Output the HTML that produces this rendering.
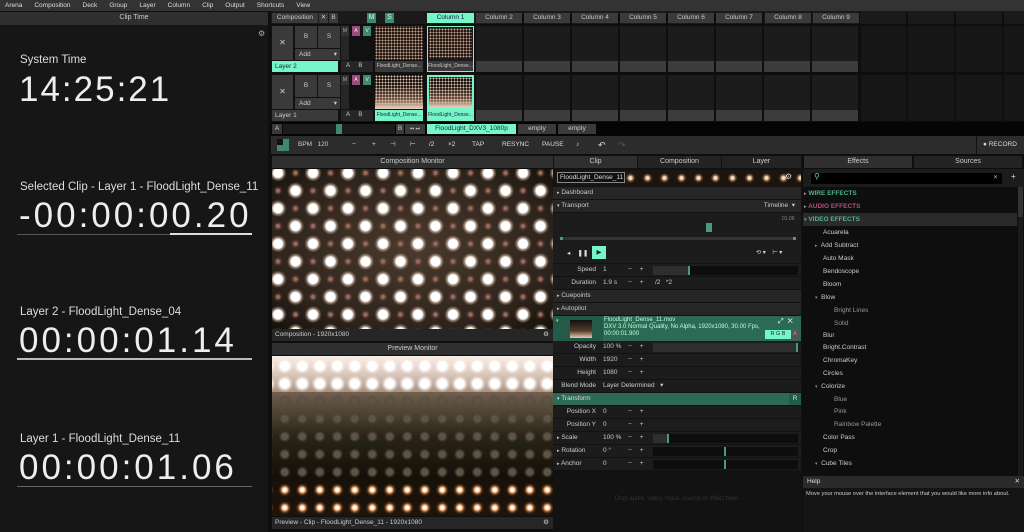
<!DOCTYPE html>
<html><head><meta charset="utf-8"><style>
*{box-sizing:border-box;margin:0;padding:0}
body{width:1024px;height:532px;background:#0e0e0e;font-family:"Liberation Sans",sans-serif;font-size:7px;color:#ccc;position:relative;overflow:hidden}
.a{position:absolute}
.menu{left:0;top:0;width:1024px;height:11px;background:#333;color:#ddd;font-size:6.5px;line-height:11px}
.menu span{margin-left:5px;margin-right:7px}
.hdr{background:#2f2f2f;color:#ccc;text-align:center;font-size:7px;line-height:12px}
.btn{background:#3a3a3a;color:#ccc;text-align:center;font-size:6.5px}
.mint{background:#76f5c8;color:#124;}
.big{color:#eee;font-size:35px;letter-spacing:2.5px}
.lab{color:#ddd;font-size:11.5px}
.row{left:553px;width:248px;height:13px;background:#1c1c1c;border-bottom:1px solid #111;font-size:6.5px;line-height:12px;color:#ccc}
.row .k{position:absolute;right:205px;text-align:right;white-space:nowrap}
.row .v{position:absolute;left:50px}
.row .pm{position:absolute;left:75px;letter-spacing:8px}
.row .bar{position:absolute;left:100px;width:145px;top:2px;height:9px;background:#0d0d0d}
.sec{background:#262626;color:#ccc}
.fx{left:810px;font-size:6.5px;color:#ccc;height:13px;line-height:13px}
.th{background:radial-gradient(circle,#c8a590 0 .8px,transparent 1.2px) 0 0/3px 3px,#140c08}
</style></head><body>
<div class="a menu"><span>Arena</span><span>Composition</span><span>Deck</span><span>Group</span><span>Layer</span><span>Column</span><span>Clip</span><span>Output</span><span>Shortcuts</span><span>View</span></div>

<div class="a hdr" style="left:0;top:12px;width:268px;height:13px">Clip Time</div>
<div class="a" style="left:0;top:25px;width:268px;height:507px;background:#161616"></div>
<div class="a" style="left:258px;top:29px;color:#aaa;font-size:8px">⚙</div>
<div class="a lab" style="left:20px;top:54px">System Time</div>
<div class="a big" style="left:19px;top:70px;letter-spacing:2px">14:25:21</div>
<div class="a lab" style="left:20px;top:181px">Selected Clip - Layer 1 - FloodLight_Dense_11</div>
<div class="a big" style="left:19px;top:196px;letter-spacing:3px">-00:00:00.20</div>
<div class="a" style="left:17px;top:234px;width:153px;height:1px;background:#555"></div>
<div class="a" style="left:170px;top:233px;width:82px;height:2px;background:#ddd"></div>
<div class="a lab" style="left:20px;top:306px">Layer 2 - FloodLight_Dense_04</div>
<div class="a big" style="left:19px;top:321px;letter-spacing:3px">00:00:01.14</div>
<div class="a" style="left:17px;top:358px;width:235px;height:2px;background:#bbb"></div>
<div class="a lab" style="left:20px;top:433px">Layer 1 - FloodLight_Dense_11</div>
<div class="a big" style="left:19px;top:448px;letter-spacing:3px">00:00:01.06</div>
<div class="a" style="left:17px;top:486px;width:235px;height:1px;background:#666"></div>

<div class="a" style="left:271px;top:11px;width:753px;height:14px;background:#1a1a1a"></div>
<div class="a" style="left:476px;top:26px;width:384px;height:46px;background:linear-gradient(#1c1c1c 0 35px,#3c3c3c 35px);"></div>
<div class="a" style="left:476px;top:75px;width:384px;height:46px;background:linear-gradient(#1c1c1c 0 35px,#3c3c3c 35px);"></div>
<div class="a" style="left:861px;top:26px;width:163px;height:46px;background:#161616"></div>
<div class="a" style="left:861px;top:75px;width:163px;height:46px;background:#161616"></div>
<div class="a" style="left:476px;top:12px;width:548px;height:110px;background:repeating-linear-gradient(90deg,transparent 0 46px,#0e0e0e 46px 48px)"></div>
<div class="a" style="left:271px;top:24px;width:753px;height:2px;background:#0e0e0e"></div>
<div class="a" style="left:271px;top:73px;width:753px;height:2px;background:#0e0e0e"></div>
<div class="a" style="left:271px;top:25px;width:205px;height:97px;background:#111"></div>

<div class="a btn" style="left:272px;top:13px;width:46px;height:10px;line-height:10px">Composition</div>
<div class="a btn" style="left:319px;top:13px;width:9px;height:10px;line-height:10px">✕</div>
<div class="a btn" style="left:329px;top:13px;width:9px;height:10px;line-height:10px">B</div>
<div class="a" style="left:367px;top:13px;width:9px;height:10px;background:#3f8a6e;color:#cfe;text-align:center;line-height:10px">M</div>
<div class="a" style="left:385px;top:13px;width:9px;height:10px;background:#3f8a6e;color:#cfe;text-align:center;line-height:10px">S</div>
<div class="a mint" style="left:427px;top:13px;width:47px;height:10px;line-height:10px;text-align:center;font-size:6.5px">Column 1</div>
<div class="a btn" style="left:476px;top:13px;width:46px;height:10px;line-height:10px">Column 2</div>
<div class="a btn" style="left:524px;top:13px;width:46px;height:10px;line-height:10px">Column 3</div>
<div class="a btn" style="left:572px;top:13px;width:46px;height:10px;line-height:10px">Column 4</div>
<div class="a btn" style="left:620px;top:13px;width:46px;height:10px;line-height:10px">Column 5</div>
<div class="a btn" style="left:668px;top:13px;width:46px;height:10px;line-height:10px">Column 6</div>
<div class="a btn" style="left:716px;top:13px;width:46px;height:10px;line-height:10px">Column 7</div>
<div class="a btn" style="left:765px;top:13px;width:46px;height:10px;line-height:10px">Column 8</div>
<div class="a btn" style="left:813px;top:13px;width:46px;height:10px;line-height:10px">Column 9</div>

<div class="a btn" style="left:272px;top:26px;width:21px;height:34px;line-height:34px;font-size:8px">✕</div>
<div class="a btn" style="left:295px;top:26px;width:22px;height:22px;line-height:22px">B</div>
<div class="a btn" style="left:318px;top:26px;width:22px;height:22px;line-height:22px">S</div>
<div class="a btn" style="left:295px;top:49px;width:45px;height:11px;line-height:11px;text-align:left;padding-left:4px">Add <span style="float:right;margin-right:3px">▾</span></div>
<div class="a mint" style="left:272px;top:61px;width:66px;height:11px;line-height:11px;padding-left:3px;font-size:6.5px">Layer 2</div>
<div class="a" style="left:341px;top:26px;width:8px;height:34px;background:#262626"></div>
<div class="a" style="left:341px;top:26px;width:8px;height:10px;background:#333;color:#aaa;font-size:5px;text-align:center;line-height:10px">M</div>
<div class="a" style="left:352px;top:26px;width:8px;height:10px;background:#9a4d7a;color:#eee;font-size:5px;text-align:center;line-height:10px">A</div>
<div class="a" style="left:363px;top:26px;width:8px;height:10px;background:#3f8a6e;color:#eee;font-size:5px;text-align:center;line-height:10px">V</div>
<div class="a" style="left:341px;top:61px;width:32px;height:11px;background:#262626;color:#ccc;font-size:6px;line-height:11px">&nbsp;&nbsp;&nbsp;A&nbsp;&nbsp;&nbsp;&nbsp;&nbsp;B</div>
<div class="a btn" style="left:272px;top:75px;width:21px;height:34px;line-height:34px;font-size:8px">✕</div>
<div class="a btn" style="left:295px;top:75px;width:22px;height:22px;line-height:22px">B</div>
<div class="a btn" style="left:318px;top:75px;width:22px;height:22px;line-height:22px">S</div>
<div class="a btn" style="left:295px;top:98px;width:45px;height:11px;line-height:11px;text-align:left;padding-left:4px">Add <span style="float:right;margin-right:3px">▾</span></div>
<div class="a btn" style="left:272px;top:110px;width:66px;height:11px;line-height:11px;text-align:left;padding-left:3px">Layer 1</div>
<div class="a" style="left:341px;top:75px;width:8px;height:34px;background:#262626"></div>
<div class="a" style="left:341px;top:75px;width:8px;height:10px;background:#333;color:#aaa;font-size:5px;text-align:center;line-height:10px">M</div>
<div class="a" style="left:352px;top:75px;width:8px;height:10px;background:#9a4d7a;color:#eee;font-size:5px;text-align:center;line-height:10px">A</div>
<div class="a" style="left:363px;top:75px;width:8px;height:10px;background:#3f8a6e;color:#eee;font-size:5px;text-align:center;line-height:10px">V</div>
<div class="a" style="left:341px;top:110px;width:32px;height:11px;background:#262626;color:#ccc;font-size:6px;line-height:11px">&nbsp;&nbsp;&nbsp;A&nbsp;&nbsp;&nbsp;&nbsp;&nbsp;B</div>

<div class="a th" style="left:375px;top:26px;width:48px;height:34px;background-position:0 4px"></div>
<div class="a btn" style="left:375px;top:61px;width:48px;height:11px;line-height:11px;font-size:5px">FloodLight_Dense...</div>
<div class="a" style="left:427px;top:26px;width:47px;height:46px;border:1px solid #76f5c8;background:#1a1a1a"></div>
<div class="a th" style="left:429px;top:28px;width:43px;height:30px"></div>
<div class="a btn" style="left:428px;top:61px;width:45px;height:10px;line-height:10px;font-size:5px">FloodLight_Dense...</div>
<div class="a" style="left:375px;top:75px;width:48px;height:34px;background:radial-gradient(circle,#e0c0a8 0 .8px,transparent 1.3px) 0 0/3px 3px,linear-gradient(#000,#000 30%,#5a4030 70%,#f0d8c8)"></div>
<div class="a mint" style="left:375px;top:110px;width:48px;height:11px;line-height:11px;font-size:5px;text-align:center">FloodLight_Dense...</div>
<div class="a" style="left:427px;top:75px;width:47px;height:46px;border:1px solid #76f5c8;background:#76f5c8"></div>
<div class="a" style="left:429px;top:77px;width:43px;height:31px;background:radial-gradient(circle,#e0c0a8 0 .8px,transparent 1.3px) 0 0/3px 3px,linear-gradient(#000,#000 30%,#5a4030 70%,#f0d8c8)"></div>
<div class="a" style="left:428px;top:110px;width:45px;height:10px;line-height:10px;font-size:5px;color:#124;text-align:center">FloodLight_Dense...</div>

<div class="a" style="left:271px;top:122px;width:753px;height:14px;background:#050505"></div>
<div class="a btn" style="left:272px;top:124px;width:10px;height:10px;line-height:10px">A</div>
<div class="a" style="left:283px;top:124px;width:112px;height:10px;background:#1c1c1c"></div>
<div class="a" style="left:336px;top:124px;width:6px;height:10px;background:#3f8a6e"></div>
<div class="a btn" style="left:396px;top:124px;width:8px;height:10px;line-height:10px">B</div>
<div class="a btn" style="left:405px;top:124px;width:20px;height:10px;line-height:10px;font-size:5px">⏮ ⏭</div>
<div class="a mint" style="left:427px;top:124px;width:89px;height:10px;line-height:10px;text-align:center;font-size:6.5px">FloodLight_DXV3_1080p</div>
<div class="a btn" style="left:518px;top:124px;width:38px;height:10px;line-height:10px">empty</div>
<div class="a btn" style="left:558px;top:124px;width:38px;height:10px;line-height:10px">empty</div>

<div class="a" style="left:271px;top:136px;width:753px;height:18px;background:#2c2c2c"></div>
<div class="a" style="left:277px;top:139px;width:12px;height:12px;background:#3f8a6e"></div>
<div class="a" style="left:277px;top:139px;width:6px;height:6px;background:#111"></div>
<div class="a" style="left:298px;top:136px;color:#ccc;font-size:6.5px;line-height:18px">BPM&nbsp;&nbsp;&nbsp;120</div>
<div class="a" style="left:344px;top:136px;width:520px;height:18px;color:#ddd;font-size:6.5px;line-height:18px">
<span class="a" style="left:8px">−</span><span class="a" style="left:28px">+</span><span class="a" style="left:46px">⊣</span><span class="a" style="left:66px">⊢</span><span class="a" style="left:85px">/2</span><span class="a" style="left:104px">×2</span><span class="a" style="left:128px">TAP</span><span class="a" style="left:158px">RESYNC</span><span class="a" style="left:198px">PAUSE</span><span class="a" style="left:232px">♪</span><span class="a" style="left:254px;font-size:9px">↶</span><span class="a" style="left:274px;color:#555;font-size:9px">↷</span></div>
<div class="a" style="left:976px;top:136px;width:1px;height:18px;background:#111"></div>
<div class="a" style="left:983px;top:136px;font-size:6.5px;line-height:18px;color:#ddd">● RECORD</div>

<div class="a hdr" style="left:272px;top:156px;width:281px;height:12px">Composition Monitor</div>
<div class="a" style="left:272px;top:169px;width:281px;height:160px;background:
radial-gradient(circle,#fff 0 4.5px,rgba(255,225,200,.5) 6px,transparent 8.5px) 6px 4px/35px 35.4px,
radial-gradient(circle,#fff 0 4.5px,rgba(255,225,200,.5) 6px,transparent 8.5px) 23.5px 21.7px/35px 35.4px,
radial-gradient(circle,#a06a58 0 1.5px,rgba(120,90,75,.35) 3px,transparent 5px) 23.5px 4px/35px 35.4px,
radial-gradient(circle,#a06a58 0 1.5px,rgba(120,90,75,.35) 3px,transparent 5px) 6px 21.7px/35px 35.4px,
radial-gradient(ellipse at center,#4a3a2e,#2e241c 70%,#15100c)"></div>
<div class="a" style="left:272px;top:329px;width:281px;height:12px;background:#262626;font-size:6.5px;line-height:12px;padding-left:3px;color:#ccc">Composition - 1920x1080<span style="float:right;margin-right:4px">⚙</span></div>
<div class="a hdr" style="left:272px;top:343px;width:281px;height:12px">Preview Monitor</div>
<div class="a" style="left:272px;top:356px;width:281px;height:160px;background:linear-gradient(#b8a090,#6a5a48 25%,#2a2418 50%,#141008 75%,#1e140c)"></div>
<div class="a" style="left:272px;top:391px;width:281px;height:90px;background:radial-gradient(circle,#5e5446 0 3px,rgba(80,70,55,.5) 4.5px,transparent 6px) 4px 1px/17.5px 17.8px"></div>
<div class="a" style="left:272px;top:356px;width:281px;height:36px;background:radial-gradient(circle,#fff 0 4.5px,rgba(255,235,225,.6) 6px,transparent 8.5px) 4px 1px/17.5px 17.8px,linear-gradient(rgba(255,245,240,.9),rgba(255,235,225,.35))"></div>
<div class="a" style="left:272px;top:480px;width:281px;height:36px;background:radial-gradient(circle,#fff 0 1.5px,#f0a060 3px,rgba(200,120,60,.4) 4.5px,transparent 6.5px) 4px 1px/17.5px 17.8px"></div>
<div class="a" style="left:272px;top:517px;width:281px;height:12px;background:#262626;font-size:6.5px;line-height:12px;padding-left:3px;color:#ccc">Preview - Clip - FloodLight_Dense_11 - 1920x1080<span style="float:right;margin-right:4px">⚙</span></div>

<div class="a" style="left:553px;top:156px;width:249px;height:376px;background:#121212"></div>
<div class="a hdr" style="left:554px;top:156px;width:83px;height:12px;background:#2f2f2f">Clip</div>
<div class="a hdr" style="left:638px;top:156px;width:83px;height:12px;background:#232323">Composition</div>
<div class="a hdr" style="left:722px;top:156px;width:79px;height:12px;background:#232323">Layer</div>
<div class="a" style="left:554px;top:170px;width:247px;height:16px;background:radial-gradient(circle,#f8dcc0 0 1.5px,rgba(200,150,100,.5) 3px,transparent 5px) 0 0/17px 16px,#1e140e"></div>
<div class="a" style="left:557px;top:172px;width:68px;height:11px;border:1px solid #888;background:#111;font-size:6.5px;line-height:10px;padding-left:2px;color:#ddd">FloodLight_Dense_11</div>
<div class="a" style="left:785px;top:172px;color:#ccc;font-size:8px">⚙</div>
<div class="a row sec" style="top:187px"><span style="margin-left:4px;font-size:5px">▸</span> Dashboard</div>
<div class="a row sec" style="top:200px"><span style="margin-left:4px;font-size:5px">▾</span> Transport<span style="position:absolute;right:6px">Timeline&nbsp; ▾</span></div>
<div class="a" style="left:553px;top:213px;width:248px;height:50px;background:#1c1c1c"></div>
<div class="a" style="left:782px;top:216px;font-size:5px;color:#888">01.06</div>
<div class="a" style="left:706px;top:223px;width:6px;height:9px;background:#4a9a7e"></div>
<div class="a" style="left:560px;top:237px;width:236px;height:3px;background:#333"></div>
<div class="a" style="left:560px;top:237px;width:3px;height:3px;background:#4a9a7e"></div>
<div class="a" style="left:793px;top:237px;width:3px;height:3px;background:#4a9a7e"></div>
<div class="a" style="left:567px;top:249px;color:#ddd;font-size:6.5px">◂&nbsp;&nbsp;&nbsp;&nbsp;❚❚</div>
<div class="a mint" style="left:592px;top:246px;width:14px;height:13px;text-align:center;line-height:13px;font-size:6.5px">▶</div>
<div class="a" style="left:756px;top:249px;color:#ddd;font-size:6px">⟲ ▾&nbsp;&nbsp;&nbsp;&nbsp;⊢ ▾</div>
<div class="a row" style="top:264px"><span class="k">Speed</span><span class="v">1</span><span class="pm">−+</span><span class="bar" style="background:linear-gradient(90deg,#2e2e2e 0 35px,#4a9a7e 35px 37px,#0d0d0d 37px)"></span></div>
<div class="a row" style="top:277px"><span class="k">Duration</span><span class="v">1.9 s</span><span class="pm">−+</span><span style="position:absolute;left:102px">/2&nbsp;&nbsp;&nbsp;*2</span></div>
<div class="a row sec" style="top:290px"><span style="margin-left:4px;font-size:5px">▸</span> Cuepoints</div>
<div class="a row sec" style="top:303px"><span style="margin-left:4px;font-size:5px">▸</span> Autopilot</div>
<div class="a" style="left:553px;top:316px;width:248px;height:25px;background:#2c6a56"></div>
<div class="a" style="left:553px;top:316px;width:50px;height:25px;background:#245a48"></div>
<div class="a" style="left:556px;top:318px;font-size:5px;color:#ccc">▾</div>
<div class="a" style="left:570px;top:320px;width:22px;height:18px;background:linear-gradient(#111,#553c2c 60%,#e8cbb5)"></div>
<div class="a" style="left:604px;top:317px;font-size:6px;line-height:7px;color:#bfd">FloodLight_Dense_11.mov<br>DXV 3.0 Normal Quality, No Alpha, 1920x1080, 30.00 Fps,<br>00:00:01.900</div>
<div class="a" style="left:778px;top:318px;font-size:7px;color:#fff">⤢&nbsp;&nbsp;✕</div>
<div class="a mint" style="left:765px;top:330px;width:26px;height:9px;font-size:5.5px;line-height:9px;text-align:center">R G B</div>
<div class="a" style="left:791px;top:330px;width:8px;height:9px;background:#555;font-size:5.5px;line-height:9px;text-align:center;color:#999">A</div>
<div class="a row" style="top:341px"><span class="k">Opacity</span><span class="v">100 %</span><span class="pm">−+</span><span class="bar" style="background:linear-gradient(90deg,#2e2e2e 0 143px,#4a9a7e 143px)"></span></div>
<div class="a row" style="top:354px"><span class="k">Width</span><span class="v">1920</span><span class="pm">−+</span></div>
<div class="a row" style="top:367px"><span class="k">Height</span><span class="v">1080</span><span class="pm">−+</span></div>
<div class="a row" style="top:380px"><span class="k">Blend Mode</span><span class="v">Layer Determined&nbsp;&nbsp; ▾</span></div>
<div class="a row" style="top:393px;background:#2c6a56;color:#ddd"><span style="margin-left:4px;font-size:5px">▾</span> Transform<span style="position:absolute;right:0;width:12px;text-align:center;background:#245a48">R</span></div>
<div class="a row" style="top:406px"><span class="k">Position X</span><span class="v">0</span><span class="pm">−+</span></div>
<div class="a row" style="top:419px"><span class="k">Position Y</span><span class="v">0</span><span class="pm">−+</span></div>
<div class="a row" style="top:432px"><span style="margin-left:4px;font-size:5px">▸</span> Scale<span class="v">100 %</span><span class="pm">−+</span><span class="bar" style="background:linear-gradient(90deg,#2e2e2e 0 14px,#4a9a7e 14px 16px,#0d0d0d 16px)"></span></div>
<div class="a row" style="top:445px"><span style="margin-left:4px;font-size:5px">▸</span> Rotation<span class="v">0 °</span><span class="pm">−+</span><span class="bar" style="background:linear-gradient(90deg,#0d0d0d 0 71px,#4a9a7e 71px 73px,#0d0d0d 73px)"></span></div>
<div class="a row" style="top:458px"><span style="margin-left:4px;font-size:5px">▸</span> Anchor<span class="v">0</span><span class="pm">−+</span><span class="bar" style="background:linear-gradient(90deg,#0d0d0d 0 71px,#4a9a7e 71px 73px,#0d0d0d 73px)"></span></div>
<div class="a" style="left:553px;top:496px;width:248px;text-align:center;font-size:6px;color:#333">Drop audio, video, mask, source or effect here.</div>

<div class="a" style="left:803px;top:156px;width:221px;height:376px;background:#0e0e0e"></div>
<div class="a hdr" style="left:804px;top:156px;width:108px;height:12px;background:#2f2f2f">Effects</div>
<div class="a hdr" style="left:914px;top:156px;width:108px;height:12px;background:#232323">Sources</div>
<div class="a" style="left:803px;top:169px;width:221px;height:18px;background:#1c1c1c"></div>
<div class="a" style="left:811px;top:173px;width:191px;height:11px;background:#000;border-radius:2px"></div>
<div class="a" style="left:814px;top:172px;color:#5fd4a8;font-size:8px">⚲</div>
<div class="a" style="left:993px;top:174px;color:#aaa;font-size:6px">✕</div>
<div class="a" style="left:1011px;top:172px;color:#ddd;font-size:8px">+</div>
<div class="a" style="left:1018px;top:187px;width:5px;height:289px;background:#1a1a1a"></div>
<div class="a" style="left:1018px;top:187px;width:5px;height:30px;background:#333"></div>
<div class="a fx" style="left:804px;top:187px;color:#4fb28e;font-weight:bold"><span style="font-size:5px;color:#888">▸</span> WIRE EFFECTS</div>
<div class="a fx" style="left:804px;top:200px;color:#b0507e;font-weight:bold"><span style="font-size:5px;color:#888">▸</span> AUDIO EFFECTS</div>
<div class="a" style="left:803px;top:213px;width:214px;height:13px;background:#2a2a2a"></div>
<div class="a fx" style="left:804px;top:213px;color:#4fb28e;font-weight:bold"><span style="font-size:5px;color:#888">▾</span> VIDEO EFFECTS</div>
<div class="a fx" style="left:823px;top:226px">Acuarela</div>
<div class="a fx" style="left:815px;top:239px"><span style="font-size:5px;color:#888">▸</span>&nbsp; Add Subtract</div>
<div class="a fx" style="left:823px;top:252px">Auto Mask</div>
<div class="a fx" style="left:823px;top:265px">Bendoscope</div>
<div class="a fx" style="left:823px;top:278px">Bloom</div>
<div class="a fx" style="left:815px;top:291px"><span style="font-size:5px;color:#888">▾</span>&nbsp; Blow</div>
<div class="a fx" style="left:834px;top:304px;color:#999">Bright Lines</div>
<div class="a fx" style="left:834px;top:317px;color:#999">Solid</div>
<div class="a fx" style="left:823px;top:329px">Blur</div>
<div class="a fx" style="left:823px;top:341px">Bright.Contrast</div>
<div class="a fx" style="left:823px;top:354px">ChromaKey</div>
<div class="a fx" style="left:823px;top:367px">Circles</div>
<div class="a fx" style="left:815px;top:380px"><span style="font-size:5px;color:#888">▾</span>&nbsp; Colorize</div>
<div class="a fx" style="left:834px;top:393px;color:#999">Blue</div>
<div class="a fx" style="left:834px;top:405px;color:#999">Pink</div>
<div class="a fx" style="left:834px;top:418px;color:#999">Rainbow Palette</div>
<div class="a fx" style="left:823px;top:431px">Color Pass</div>
<div class="a fx" style="left:823px;top:444px">Crop</div>
<div class="a fx" style="left:815px;top:457px"><span style="font-size:5px;color:#888">▾</span>&nbsp; Cube Tiles</div>
<div class="a" style="left:803px;top:476px;width:221px;height:12px;background:#2a2a2a;font-size:6.5px;line-height:12px;padding-left:4px;color:#ddd">Help<span style="float:right;margin-right:4px">✕</span></div>
<div class="a" style="left:803px;top:488px;width:221px;height:44px;background:#141414;font-size:5.7px;padding:3px 3px;color:#ccc;white-space:nowrap">Move your mouse over the interface element that you would like more info about.</div>
</body></html>
